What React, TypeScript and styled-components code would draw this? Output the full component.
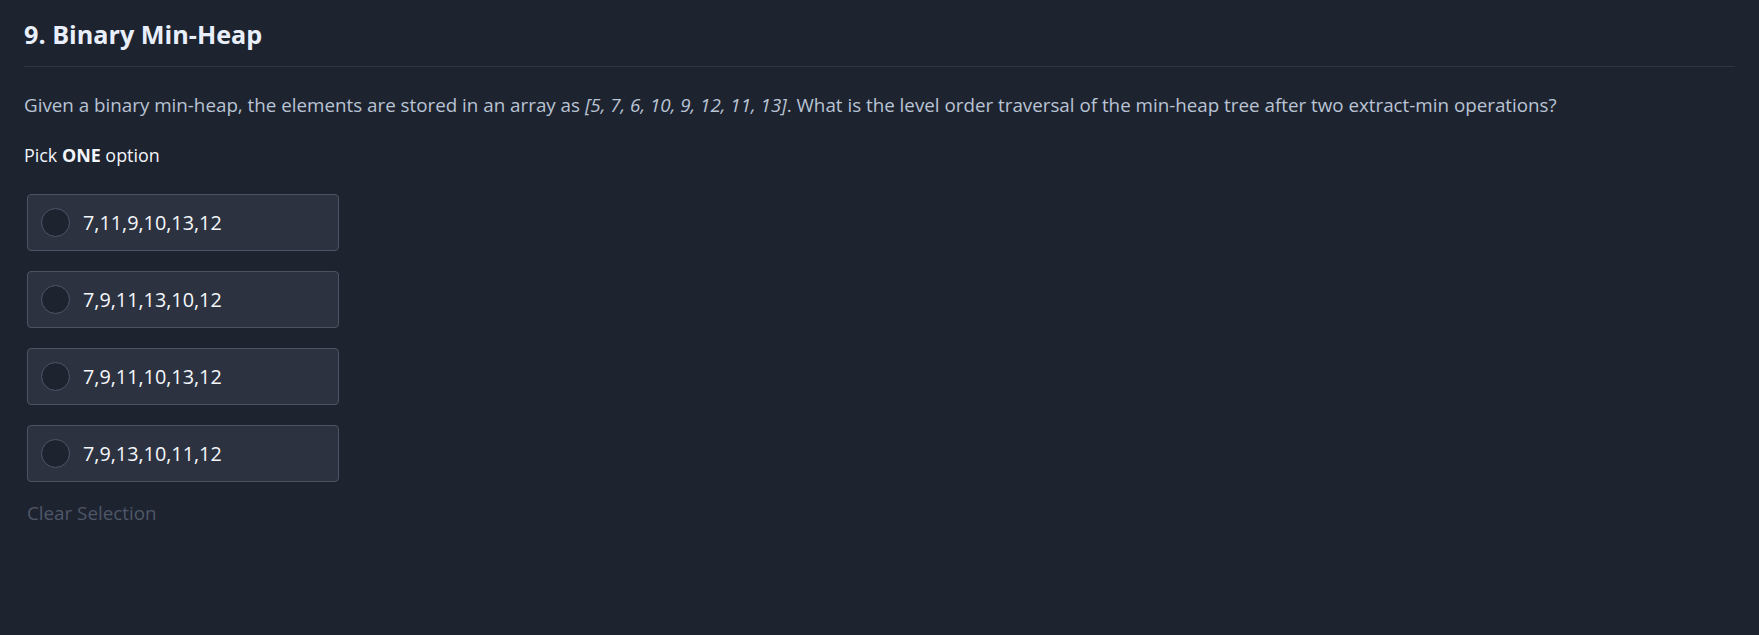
import styled, { createGlobalStyle } from "styled-components";

const GlobalStyle = createGlobalStyle`
  html, body {
    margin: 0;
    padding: 0;
    background: #1e2330;
  }

  body {
    font-family: "Open Sans", "Noto Sans", sans-serif;
  }
`;

const Page = styled.main`
  min-height: 635px;
  padding: 17px 24px 0;
  box-sizing: border-box;
  background: #1e2330;
`;

const Title = styled.h2`
  margin: 0;
  padding-bottom: 15px;
  border-bottom: 1px solid #2f3544;
  font-size: 25.2px;
  font-weight: 700;
  line-height: 34px;
  color: #e8effa;
`;

const Question = styled.p`
  margin: 25px 0 0;
  font-size: 18.8px;
  line-height: 26px;
  color: #b9c4d4;

  em {
    font-style: italic;
  }
`;

const Hint = styled.p`
  margin: 25px 0 0;
  font-size: 17.9px;
  line-height: 24px;
  color: #f2f5fa;

  strong {
    font-weight: 700;
  }
`;

const Options = styled.ul`
  list-style: none;
  margin: 27px 0 0 3px;
  padding: 0;
  display: flex;
  flex-direction: column;
  gap: 20px;
`;

const Option = styled.li`
  width: 312px;
  height: 57px;
  box-sizing: border-box;
  display: flex;
  align-items: center;
  gap: 13px;
  padding: 0 13px;
  background: #2d3240;
  border: 1px solid #4d5362;
  border-radius: 4px;
  cursor: pointer;
`;

const Radio = styled.span`
  width: 29px;
  height: 29px;
  box-sizing: border-box;
  border-radius: 50%;
  border: 1px solid #4f5666;
  background: #1e2330;
  flex-shrink: 0;
`;

const Label = styled.span`
  font-size: 19.8px;
  line-height: 28px;
  color: #f4f7fb;
`;

const Clear = styled.button`
  display: block;
  margin: 18px 0 0 3px;
  padding: 0;
  border: none;
  background: none;
  font-family: inherit;
  font-size: 18.8px;
  line-height: 26px;
  color: #4e5767;
  cursor: pointer;
`;

const options = ["7,11,9,10,13,12", "7,9,11,13,10,12", "7,9,11,10,13,12", "7,9,13,10,11,12"];

const App = () => {
  return (
    <>
      <GlobalStyle />
      <Page>
        <Title>9. Binary Min-Heap</Title>
        <Question>
          Given a binary min-heap, the elements are stored in an array as <em>[5, 7, 6, 10, 9, 12, 11, 13]</em>. What
          is the level order traversal of the min-heap tree after two extract-min operations?
        </Question>
        <Hint>
          Pick <strong>ONE</strong> option
        </Hint>
        <Options>
          {options.map((o) => (
            <Option key={o}>
              <Radio />
              <Label>{o}</Label>
            </Option>
          ))}
        </Options>
        <Clear>Clear Selection</Clear>
      </Page>
    </>
  );
};

export default App;
